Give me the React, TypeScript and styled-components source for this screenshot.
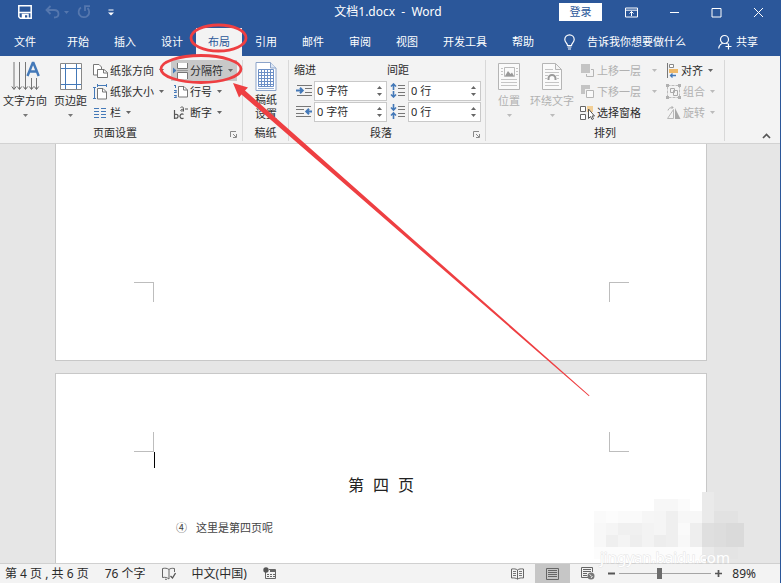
import React from 'react';
import styled, { createGlobalStyle, css } from 'styled-components';

const BLUE = '#2b579a';
const INK = '#2b2b2b';
const MUTED = '#b1b1b1';
const ACCENT = '#4479b8';
const RED = '#ee3f42';

const GlobalStyle = createGlobalStyle`
  * { box-sizing: border-box; }
  html, body, #root { height: 100%; }
  body {
    margin: 0;
    font-family: "Noto Sans", "Noto Sans CJK SC", sans-serif;
    font-size: 11px;
    line-height: 16px;
    color: ${INK};
  }
  button, input { font: inherit; color: inherit; }
  button { border: 0; padding: 0; background: none; white-space: nowrap; }
`;

const Window = styled.div`
  position: relative;
  display: flex;
  flex-direction: column;
  height: 100vh;
  overflow: hidden;
  border-right: 1px solid ${BLUE};
  background: #e6e6e6;
`;

const Svg = styled.svg`
  display: block;
  flex: none;
  fill: none;
`;

/* ---------- title bar ---------- */

const TitleBar = styled.header`
  display: grid;
  grid-template-columns: 1fr auto 1fr;
  align-items: center;
  height: 24px;
  flex: none;
  padding-right: 4px;
  background: ${BLUE};
  color: #fff;
`;

const QuickAccess = styled.div`
  display: flex;
  align-items: center;
  padding-left: 18px;
`;

const QuickButton = styled.button<{ $gap?: number }>`
  margin-right: ${(p) => p.$gap ?? 0}px;
`;

const Title = styled.h1`
  margin: 0;
  font-size: 12px;
  font-weight: 400;
  white-space: pre;
`;

const WindowControls = styled.div`
  display: flex;
  align-items: center;
  justify-content: flex-end;
  gap: 31px;
  padding-right: 12px;
`;

const SignIn = styled.button`
  width: 43px;
  height: 18px;
  margin-right: -8px;
  background: #fff;
  color: ${BLUE};
`;

/* ---------- tabs ---------- */

const TabBar = styled.nav`
  display: flex;
  align-items: stretch;
  height: 32px;
  flex: none;
  padding: 4px 22px 0 2px;
  gap: 1px;
  background: ${BLUE};
  color: #fff;
`;

const Tab = styled.button<{ $active?: boolean; $file?: boolean }>`
  padding: 0 12px;
  margin-right: ${(p) => (p.$file ? 6 : 0)}px;
  ${(p) =>
    p.$active &&
    css`
      background: #f3f3f3;
      color: ${BLUE};
    `}
`;

const TellMe = styled.button`
  display: flex;
  align-items: center;
  gap: 12px;
  margin-left: 17px;
`;

const Share = styled.button`
  display: flex;
  align-items: center;
  gap: 4px;
  margin-left: auto;
`;

/* ---------- ribbon ---------- */

const Ribbon = styled.section`
  display: flex;
  flex: none;
  height: 88px;
  padding-top: 4px;
  background: #f3f3f3;
  border-bottom: 1px solid #d2d2d2;
`;

const Group = styled.div<{ $padLeft: number; $padRight: number }>`
  display: flex;
  flex-direction: column;
  margin-bottom: 2px;
  border-right: 1px solid #d8d8d8;
  & > :first-child {
    padding-left: ${(p) => p.$padLeft}px;
    padding-right: ${(p) => p.$padRight}px;
  }
`;

const GroupBody = styled.div`
  display: flex;
  flex: none;
  height: 64px;
`;

const GroupFooter = styled.div`
  display: flex;
  flex: none;
  align-items: center;
  height: 18px;
`;

const GroupName = styled.span`
  flex: 1;
  text-align: center;
`;

const Launcher = styled.button`
  width: 12px;
  padding-top: 3px;
`;

const LargeButton = styled.button<{ $gap?: number }>`
  display: flex;
  flex-direction: column;
  align-items: center;
  margin-right: ${(p) => p.$gap ?? 0}px;
  &:disabled { color: ${MUTED}; }
`;

const LargeIcon = styled.span`
  display: grid;
  place-items: center;
  height: 33px;
`;

const TwoLine = styled.span`
  line-height: 14px;
`;

const ArrowSlot = styled.span`
  display: grid;
  place-items: center;
  height: 12px;
`;

const Column = styled.div<{ $gap?: number }>`
  display: flex;
  flex-direction: column;
  align-items: flex-start;
  margin-right: ${(p) => p.$gap ?? 0}px;
`;

const SmallButton = styled.button<{ $active?: boolean }>`
  display: flex;
  align-items: center;
  gap: 2px;
  height: 21px;
  padding: 0 4px 0 2px;
  background: ${(p) => (p.$active ? '#c8c8c8' : 'transparent')};
  &:disabled { color: ${MUTED}; }
`;

const SmallArrow = styled.span<{ $wide?: boolean }>`
  padding-left: ${(p) => (p.$wide ? 9 : 3)}px;
`;

const FieldGrid = styled.div`
  display: grid;
  grid-template-columns: 20px 73px 21px 73px;
  grid-template-rows: 20px 21px 21px;
  align-items: center;
`;

const FieldHeading = styled.span`
  grid-column: span 2;
`;

const FieldLabel = styled.label`
  display: grid;
  place-items: center;
`;

const Spinner = styled.div`
  display: flex;
  height: 20px;
  border: 1px solid #c9c9c9;
  background: #fff;
`;

const SpinnerInput = styled.input`
  flex: 1;
  min-width: 0;
  padding: 0 2px;
  border: 0;
  background: none;
  outline: none;
`;

const SpinnerButtons = styled.div`
  display: flex;
  flex-direction: column;
  justify-content: space-evenly;
  padding: 0 4px;
`;

const Collapse = styled.button`
  align-self: flex-end;
  margin: 0 9px 4px auto;
`;

/* ---------- document ---------- */

const Workspace = styled.main`
  flex: 1;
  min-height: 0;
  display: flex;
  flex-direction: column;
  gap: 12px;
  padding: 0 73px 0 55px;
  overflow: hidden;
`;

const Page = styled.article<{ $position: 'previous' | 'current' }>`
  display: flex;
  flex-direction: column;
  border: 1px solid #c8c8c8;
  background: #fff;
  ${(p) =>
    p.$position === 'previous'
      ? css`
          flex: none;
          border-top: 0;
          padding-top: 138px;
          padding-bottom: 58px;
        `
      : css`
          flex: 1;
          border-bottom: 0;
          padding-top: 58px;
        `}
`;

const CropMarks = styled.div`
  display: flex;
  justify-content: space-between;
  padding: 0 77px 0 78px;
`;

const CropMark = styled.span<{ $edge: 'top' | 'bottom'; $side: 'left' | 'right' }>`
  width: 20px;
  height: 20px;
  border: 0 solid #bdbdbd;
  border-${(p) => p.$edge}-width: 1px;
  border-${(p) => p.$side}-width: 1px;
`;

const Caret = styled.span`
  width: 1px;
  height: 16px;
  margin-left: 98px;
  background: #000;
`;

const PageTitle = styled.h2`
  margin: 5px 0 0;
  font-size: 16px;
  line-height: 24px;
  font-weight: 400;
  text-align: center;
  color: #222;
`;

const TitleChars = styled.span`
  display: inline-flex;
  gap: 9px;
`;

const ListLine = styled.p`
  display: flex;
  gap: 9px;
  margin: 22px 0 0 120px;
  font-family: "Noto Sans CJK SC", sans-serif;
  color: #444;
`;

/* ---------- status bar ---------- */

const StatusBar = styled.footer`
  display: flex;
  align-items: center;
  flex: none;
  height: 20px;
  padding: 0 24px 0 5px;
  border-top: 1px solid #d0d0d0;
  background: #f3f3f3;
  font-size: 12px;
`;

const StatusItem = styled.button`
  margin-right: 16px;
`;

const StatusRight = styled.div`
  display: flex;
  align-items: center;
  align-self: stretch;
  margin-left: auto;
`;

const ViewButton = styled.button<{ $active?: boolean }>`
  display: grid;
  place-items: center;
  width: 35px;
  height: 100%;
  background: ${(p) => (p.$active ? '#c6c6c6' : 'transparent')};
`;

const ZoomSlider = styled.input`
  appearance: none;
  width: 92px;
  height: 12px;
  margin: 0 4px;
  background: linear-gradient(#a5a5a5, #a5a5a5) center / 100% 1px no-repeat;
  &::-webkit-slider-thumb {
    appearance: none;
    width: 5px;
    height: 11px;
    background: #6c6c6c;
  }
`;

const ZoomValue = styled.button`
  margin-left: 10px;
`;

/* ---------- overlays ---------- */

const Annotation = styled(Svg)`
  position: absolute;
  top: 0;
  left: 0;
  pointer-events: none;
`;

const Watermark = styled(Svg)`
  position: absolute;
  right: 36px;
  bottom: 12px;
  pointer-events: none;
`;

/* ---------- icons ---------- */

type IconProps = { w: number; h: number; children: React.ReactNode };

const Icon = ({ w, h, children }: IconProps) => (
  <Svg width={w} height={h} viewBox={`0 0 ${w} ${h}`} aria-hidden="true">
    {children}
  </Svg>
);

const Down = ({ color = '#777' }: { color?: string }) => (
  <Icon w={5} h={3}>
    <path d="M0 0h5L2.500 3z" fill={color} />
  </Icon>
);

const Up = () => (
  <Icon w={5} h={3}>
    <path d="M0 3h5L2.500 0z" fill="#666" />
  </Icon>
);

const SaveIcon = () => (
  <Icon w={14} h={14}>
    <path d="M.8 .8h12.400v12.400H2.300L.8 11.700z" stroke="#fff" strokeWidth="1.500" />
    <path d="M1 7.500h12M4.500 13V9.500h5.500V13" stroke="#fff" strokeWidth="1.500" />
    <path d="M5 10h2v3H5z" fill="#fff" />
  </Icon>
);

const UndoIcon = () => (
  <Icon w={24} h={14}>
    <path d="M5.500 1L1.500 5l4 4M2 5h7c3 0 4.500 2 4.500 4S12 12.500 9 12.500" stroke="#5577ae" strokeWidth="1.800" />
    <path d="M19 6h5l-2.500 3z" fill="#5577ae" />
  </Icon>
);

const RedoIcon = () => (
  <Icon w={14} h={14}>
    <path d="M4 2.500A5.300 5.300 0 1 0 10.500 3M8 6V1.200h5" stroke="#5577ae" strokeWidth="1.800" />
  </Icon>
);

const CustomizeIcon = () => (
  <Icon w={6} h={7}>
    <path d="M.5 1h5" stroke="#fff" />
    <path d="M0 3.500h6L3 6.500z" fill="#fff" />
  </Icon>
);

const RibbonOptionsIcon = () => (
  <Icon w={13} h={11}>
    <path d="M.5 1h12v9H.5zM.5 3.200h12M6.500 9V4.500M4.500 6.500l2-2 2 2" stroke="#fff" />
  </Icon>
);

const BulbIcon = () => (
  <Icon w={11} h={16}>
    <path d="M3.500 11.500c0-2.500-2.700-3-2.700-6a4.700 4.700 0 0 1 9.400 0c0 3-2.700 3.500-2.700 6zM3.500 13h4M4 15h3" stroke="#fff" strokeWidth="1.200" />
  </Icon>
);

const ShareIcon = () => (
  <Icon w={14} h={16}>
    <circle cx="6.500" cy="5.500" r="4" stroke="#fff" strokeWidth="1.200" />
    <path d="M.7 14.500c.2-2.500 1.800-4.500 4-5.300M8.300 9l1.200 1M10.500 9.500v6M7.500 12.500h6" stroke="#fff" strokeWidth="1.200" />
  </Icon>
);

const TextDirectionIcon = () => (
  <Icon w={29} h={31}>
    <path d="M3 1v27M8.500 1v27M14.500 1v27M20.500 17v11M25.500 17v11" stroke="#777" />
    <path d="M.8 25.500L3 28.500l2.200-3M6.300 25.500l2.200 3 2.200-3M12.300 25.500l2.200 3 2.200-3M18.300 25.500l2.200 3 2.200-3M23.300 25.500l2.200 3 2.200-3" stroke="#666" />
    <path d="M16.500 15L21.700 2h.8L27.700 15M18 10.500h8" stroke={ACCENT} strokeWidth="2.400" />
  </Icon>
);

const MarginsIcon = () => (
  <Icon w={22} h={27}>
    <path d="M.5 .5h21v26H.5z" fill="#fff" stroke="#888" />
    <path d="M5.500 1v25M16.500 1v25M1 5.500h20M1 21.500h20" stroke={ACCENT} />
  </Icon>
);

const sheet = 'h5.500l3.500 3.500v7h-9z';

const OrientationIcon = () => (
  <Icon w={15} h={16}>
    <path d="M.5 1.500H6L8.500 4v8h-8z" fill="#fff" stroke="#777" />
    <path d="M4.500 6.500H11l3.500 3v5h-10z" fill="#fff" stroke="#777" />
    <path d="M10.500 6.500v3.500h4" stroke="#777" />
  </Icon>
);

const SizeIcon = () => (
  <Icon w={15} h={16}>
    <path d={`M4.500 4.500${sheet}`} fill="#fff" stroke="#777" />
    <path d="M9.500 4.500V8h4" stroke="#777" />
    <path d="M1.500 3v12M0 3.500h3M0 14.500h3M4.500 1.500h9M4.500 0v3M13.500 0v3" stroke={ACCENT} />
  </Icon>
);

const ColumnsIcon = () => (
  <Icon w={15} h={12}>
    <path d="M1 1.500h5M1 4.500h5M1 7.500h5M1 10.500h5M8 1.500h5M8 4.500h5M8 7.500h5M8 10.500h5" stroke={ACCENT} />
  </Icon>
);

const BreaksIcon = () => (
  <Icon w={15} h={16}>
    <path d="M4.500 0v5.500h10V0M4.500 16V9.500h10V16" fill="#fff" stroke="#777" />
    <path d="M4 7.500h11" stroke="#999" />
    <path d="M0 4.500v6l3.500-3z" fill={ACCENT} />
  </Icon>
);

const LineNumbersIcon = () => (
  <Icon w={15} h={15}>
    <path d={`M5.500 2.500${sheet}`} fill="#fff" stroke="#777" />
    <path d="M10.500 2.500V6h4" stroke="#777" />
    <path d="M2.500 1v3M1 1.500h2M1 6.500h2.500M1 8.500h2.500M1 11.500h2.500M1 13.500h2.500M3 6v3M3 11v3" stroke={ACCENT} />
  </Icon>
);

const HyphenationIcon = () => (
  <Icon w={15} h={16}>
    <path d="M1.500 5v9M1.500 10a2 2 0 1 1 0 2.500M10.500 9.500a2.200 2.200 0 1 0 0 3.500" stroke="#555" strokeWidth="1.200" />
    <path d="M7.500 2.500c1-.8 3-.8 3 .8V6.500M10.500 4.200c-4 0-3.500 3 0 1.300M12 4h3" stroke="#555" />
  </Icon>
);

const GridPaperIcon = () => (
  <Icon w={22} h={29}>
    <path d="M1 .5h14.500L21 6v22.500H1z" fill="#fff" stroke="#8ba3c9" />
    <path d="M15.500 .5V6H21" fill="#dde7f5" stroke="#8ba3c9" />
    <path d="M3.500 7.500h15v17h-15zM3.500 10.500h15M3.500 13.500h15M3.500 16.500h15M3.500 19.500h15M3.500 22.500h15M6.500 7.500v17M9.500 7.500v17M12.500 7.500v17M15.500 7.500v17" stroke="#6c8fc6" />
    <path d="M3 26.500h16" stroke="#9fb6da" />
  </Icon>
);

const IndentIcon = ({ right }: { right?: boolean }) => (
  <Icon w={16} h={13}>
    <path d={right ? 'M0 1.500h15M0 4.500h8M0 8.500h8M0 11.500h15' : 'M1 1.500h15M9 4.500h7M9 8.500h7M1 11.500h15'} stroke="#777" />
    <path d={right ? 'M16 6.500h-5M13 3.800l-2.700 2.700L13 9.200' : 'M0 6.500h6M4 3.800l2.700 2.700L4 9.200'} stroke={ACCENT} strokeWidth="2" />
  </Icon>
);

const SpacingIcon = ({ after }: { after?: boolean }) => (
  <Icon w={16} h={15}>
    <path d="M8 2.500h7M8 5.500h7M8 9.500h7M8 12.500h7" stroke="#777" />
    <path
      d={after ? 'M3.500 0v6M1 3.500L3.500 6 6 3.500M3.500 15V9M1 11.500L3.500 9 6 11.500' : 'M3.500 7V1M1 3.500L3.500 1 6 3.500M3.500 8v6M1 11.500L3.500 14 6 11.500'}
      stroke={ACCENT}
      strokeWidth="1.600"
    />
  </Icon>
);

const LauncherIcon = () => (
  <Icon w={7} h={7}>
    <path d="M.5 6V.5H6M3 3l3 3M6.500 3v3.500H3" stroke="#888" />
  </Icon>
);

const PositionIcon = () => (
  <Icon w={22} h={27}>
    <path d="M.5 .5h21v26H.5z" fill="#fafafa" stroke="#b5b5b5" />
    <path d="M6.500 4.500h10v9h-10z" stroke="#bbb" />
    <path d="M7 13l3-5 2.500 3 1.500-1.500L16 13z" fill="#999" />
    <path d="M3 5.500h2M3 8.500h2M3 11.500h2M18 5.500h2M18 8.500h2M18 11.500h2M3 16.500h16M3 19.500h16M3 22.500h16" stroke="#c5c5c5" />
  </Icon>
);

const WrapIcon = () => (
  <Icon w={20} h={27}>
    <path d="M.5 .5h13l6 6v20H.5zM13.500 .5v6h6" fill="#fafafa" stroke="#b5b5b5" />
    <path d="M3 6.500h8M3 9.500h14M3 12.500h3M14 12.500h3M3 15.500h2M15 15.500h2M3 19.500h14M3 22.500h14" stroke="#c5c5c5" />
    <path d="M6.500 17v-1.500a3.500 3.500 0 0 1 7 0V17" stroke="#999" strokeWidth="2" />
  </Icon>
);

const ForwardIcon = () => (
  <Icon w={15} h={15}>
    <path d="M1 1h9v9H1z" fill="#c4c4c4" />
    <path d="M11 6.500h2.500v7h-7V11" stroke="#b5b5b5" />
  </Icon>
);

const BackwardIcon = () => (
  <Icon w={15} h={15}>
    <path d="M1 1h9v4H5v5H1z" fill="#c4c4c4" />
    <path d="M6.500 6.500h7v7h-7z" fill="#fafafa" stroke="#b5b5b5" />
  </Icon>
);

const SelectionIcon = () => (
  <Icon w={15} h={16}>
    <path d="M.5 1.500h5v5h-5zM.5 9.500h5v5h-5z" fill="#fff" stroke="#666" />
    <path d="M7 1h6v6H7z" fill="#f2cf96" />
    <path d="M8.500 4v9.500l2-2 1.500 3 1.500-.8-1.500-2.700h2.500z" fill="#fff" stroke="#555" />
  </Icon>
);

const AlignIcon = () => (
  <Icon w={13} h={15}>
    <path d="M1.500 0v15" stroke="#777" />
    <path d="M3.500 1.500h4v3h-4z" fill="#fff" stroke="#888" />
    <path d="M3 6h9v4H3z" fill="#eeb868" />
    <path d="M10 12.500H4.500M6.500 10.500l-2 2 2 2" stroke={ACCENT} strokeWidth="1.300" />
  </Icon>
);

const GroupIcon = () => (
  <Icon w={15} h={15}>
    <path d="M1.500 1.500h12v12h-12z" stroke="#bbb" strokeDasharray="3 1" />
    <path d="M4.500 4.500h4v4h-4zM7.500 6.500h4v5h-4z" stroke="#aaa" />
    <path d="M0 0h3v3H0zM12 0h3v3h-3zM0 12h3v3H0zM12 12h3v3h-3z" fill="#b0b0b0" />
  </Icon>
);

const RotateIcon = () => (
  <Icon w={15} h={13}>
    <path d="M7.500 12.500v-9l-6 9z" stroke="#b8b8b8" />
    <path d="M9 13V2l5.500 11z" fill="#a8a8a8" />
    <path d="M2 4.500C2.500 2 4.500 1.500 7 1.500M5.500 0L7 1.500 5.500 3" stroke="#b0b0b0" />
  </Icon>
);

const ProofIcon = () => (
  <Icon w={14} h={13}>
    <path d="M7 2.500C5 1 3 1 .5 1.500v9c2.500-.5 4.500 0 6.500 1.500M7 2.500C8 1.500 10 1 12.500 1.500V5M7 2.500V12M3 12l2 1" stroke="#666" />
    <path d="M8.500 9l2 2 3-5" stroke="#555" strokeWidth="1.300" />
  </Icon>
);

const MacroIcon = () => (
  <Icon w={13} h={13}>
    <path d="M2.500 4v7.500h10V2.500H6" stroke="#666" />
    <circle cx="3" cy="3" r="2.700" fill="#555" />
    <path d="M7 3h5v2H7z" fill="#666" />
    <path d="M4 7.500h2M7 7.500h2M10 7.500h2M4 9.500h2M7 9.500h2M10 9.500h2" stroke="#666" />
  </Icon>
);

const ReadIcon = () => (
  <Icon w={13} h={12}>
    <path d="M6.500 2C5 .8 3 .7 .5 1v9c2.500-.3 4.500 0 6 1.200C8 10 10 9.700 12.500 10V1C10 .7 8 .8 6.500 2v9" stroke="#666" />
    <path d="M2 3.500h3M2 5.500h3M2 7.500h3M8 3.500h3M8 5.500h3M8 7.500h3" stroke="#777" />
  </Icon>
);

const PrintIcon = () => (
  <Icon w={13} h={12}>
    <path d="M.5 .5h12v11H.5zM2 2.500h9M2 4.500h9M2 6.500h9M2 8.500h9" stroke="#666" />
  </Icon>
);

const WebIcon = () => (
  <Icon w={14} h={13}>
    <path d="M7 10.500H.5V.5h11V5M2 2.500h8M2 4.500h8M2 6.500h4M2 8.500h4" stroke="#666" />
    <circle cx="10" cy="9" r="3.500" fill="#777" />
    <path d="M8.500 7.500l2 1.500M10 11l1.500-2" stroke="#eee" />
  </Icon>
);

/* ---------- composed controls ---------- */

type CommandProps = {
  icon: React.ReactNode;
  label: string;
  menu?: boolean;
  wide?: boolean;
  active?: boolean;
  disabled?: boolean;
};

const Command = ({ icon, label, menu, wide, active, disabled }: CommandProps) => (
  <SmallButton $active={active} disabled={disabled}>
    {icon}
    {label}
    {menu && (
      <SmallArrow $wide={wide}>
        <Down color={disabled ? '#bbb' : '#666'} />
      </SmallArrow>
    )}
  </SmallButton>
);

type BigProps = { icon: React.ReactNode; label: string; gap: number; disabled?: boolean };

const BigCommand = ({ icon, label, gap, disabled }: BigProps) => (
  <LargeButton $gap={gap} disabled={disabled}>
    <LargeIcon>{icon}</LargeIcon>
    {label}
    <ArrowSlot>
      <Down color={disabled ? '#bbb' : '#777'} />
    </ArrowSlot>
  </LargeButton>
);

type FieldProps = { id: string; icon: React.ReactNode; name: string; value: string };

const Field = ({ id, icon, name, value }: FieldProps) => (
  <>
    <FieldLabel htmlFor={id} aria-label={name}>
      {icon}
    </FieldLabel>
    <Spinner>
      <SpinnerInput id={id} defaultValue={value} />
      <SpinnerButtons>
        <button aria-label={`${name} +`}>
          <Up />
        </button>
        <button aria-label={`${name} -`}>
          <Down color="#666" />
        </button>
      </SpinnerButtons>
    </Spinner>
  </>
);

const TABS = ['开始', '插入', '设计', '布局', '引用', '邮件', '审阅', '视图', '开发工具', '帮助'];

/* x, y, width, height, fill of each mosaic block */
const BLOCKS: [number, number, number, number, string][] = [
  [60, 7, 24, 12, '#f7f7f7'],
  [84, 7, 12, 12, '#fbfbfb'],
  [0, 19, 12, 12, '#fafafa'],
  [12, 19, 12, 12, '#fcfcfc'],
  [24, 19, 24, 12, '#fafafa'],
  [48, 19, 12, 12, '#f6f6f6'],
  [60, 19, 12, 24, '#f5f5f5'],
  [72, 19, 12, 36, '#efefef'],
  [84, 19, 24, 12, '#f7f7f7'],
  [0, 31, 12, 24, '#f8f8f8'],
  [12, 31, 12, 12, '#f5f5f5'],
  [24, 31, 24, 12, '#f0f0f0'],
  [48, 31, 12, 24, '#f3f3f3'],
  [84, 31, 12, 12, '#fafafa'],
  [96, 31, 12, 24, '#eeeeee'],
  [12, 43, 12, 12, '#efefef'],
  [24, 43, 12, 12, '#f4f4f4'],
  [36, 43, 12, 12, '#eeeeee'],
  [60, 43, 12, 12, '#ededed'],
  [84, 43, 12, 12, '#f8f8f8'],
  [0, 55, 108, 12, '#fcfcfc'],
  [108, 0, 12, 67, '#eaeaea'],
  [108, 31, 12, 24, '#dfdfdf'],
  [120, 19, 24, 12, '#e2e2e2'],
  [120, 31, 12, 24, '#dddddd'],
  [132, 31, 18, 24, '#dadada'],
  [120, 55, 24, 12, '#e4e4e4'],
];

export default function App() {
  return (
    <Window>
      <GlobalStyle />
      <TitleBar>
        <QuickAccess>
          <QuickButton $gap={13} aria-label="保存"><SaveIcon /></QuickButton>
          <QuickButton $gap={8} aria-label="撤消"><UndoIcon /></QuickButton>
          <QuickButton $gap={17} aria-label="重复"><RedoIcon /></QuickButton>
          <QuickButton aria-label="自定义"><CustomizeIcon /></QuickButton>
        </QuickAccess>
        <Title>{'文档1.docx  -  Word'}</Title>
        <WindowControls>
          <SignIn>登录</SignIn>
          <button aria-label="功能区显示选项"><RibbonOptionsIcon /></button>
          <button aria-label="最小化">
            <Icon w={11} h={11}><path d="M1 5.500h9" stroke="#fff" /></Icon>
          </button>
          <button aria-label="最大化">
            <Icon w={11} h={11}><path d="M1 1.500h9v8.500H1z" stroke="#fff" /></Icon>
          </button>
          <button aria-label="关闭">
            <Icon w={11} h={11}><path d="M1 1l9 9M10 1l-9 9" stroke="#fff" /></Icon>
          </button>
        </WindowControls>
      </TitleBar>

      <TabBar>
        <Tab $file>文件</Tab>
        {TABS.map((t) => (
          <Tab key={t} $active={t === '布局'}>{t}</Tab>
        ))}
        <TellMe><BulbIcon />告诉我你想要做什么</TellMe>
        <Share><ShareIcon />共享</Share>
      </TabBar>

      <Ribbon>
        <Group $padLeft={3} $padRight={5}>
          <GroupBody>
            <BigCommand icon={<TextDirectionIcon />} label="文字方向" gap={7} />
            <BigCommand icon={<MarginsIcon />} label="页边距" gap={4} />
            <Column $gap={3}>
              <Command icon={<OrientationIcon />} label="纸张方向" menu />
              <Command icon={<SizeIcon />} label="纸张大小" menu />
              <Command icon={<ColumnsIcon />} label="栏" menu />
            </Column>
            <Column>
              <Command icon={<BreaksIcon />} label="分隔符" menu active />
              <Command icon={<LineNumbersIcon />} label="行号" menu />
              <Command icon={<HyphenationIcon />} label="断字" menu />
            </Column>
          </GroupBody>
          <GroupFooter>
            <GroupName>页面设置</GroupName>
            <Launcher aria-label="页面设置选项"><LauncherIcon /></Launcher>
          </GroupFooter>
        </Group>

        <Group $padLeft={12} $padRight={11}>
          <GroupBody>
            <LargeButton>
              <LargeIcon><GridPaperIcon /></LargeIcon>
              <TwoLine>稿纸<br />设置</TwoLine>
            </LargeButton>
          </GroupBody>
          <GroupFooter><GroupName>稿纸</GroupName></GroupFooter>
        </Group>

        <Group $padLeft={5} $padRight={4}>
          <GroupBody>
            <FieldGrid>
              <FieldHeading>缩进</FieldHeading>
              <FieldHeading>间距</FieldHeading>
              <Field id="indent-left" icon={<IndentIcon />} name="左缩进" value="0 字符" />
              <Field id="space-before" icon={<SpacingIcon />} name="段前间距" value="0 行" />
              <Field id="indent-right" icon={<IndentIcon right />} name="右缩进" value="0 字符" />
              <Field id="space-after" icon={<SpacingIcon after />} name="段后间距" value="0 行" />
            </FieldGrid>
          </GroupBody>
          <GroupFooter>
            <GroupName>段落</GroupName>
            <Launcher aria-label="段落选项"><LauncherIcon /></Launcher>
          </GroupFooter>
        </Group>

        <Group $padLeft={12} $padRight={5}>
          <GroupBody>
            <BigCommand icon={<PositionIcon />} label="位置" gap={10} disabled />
            <BigCommand icon={<WrapIcon />} label="环绕文字" gap={4} disabled />
            <Column $gap={3}>
              <Command icon={<ForwardIcon />} label="上移一层" menu wide disabled />
              <Command icon={<BackwardIcon />} label="下移一层" menu wide disabled />
              <Command icon={<SelectionIcon />} label="选择窗格" />
            </Column>
            <Column>
              <Command icon={<AlignIcon />} label="对齐" menu />
              <Command icon={<GroupIcon />} label="组合" menu disabled />
              <Command icon={<RotateIcon />} label="旋转" menu disabled />
            </Column>
          </GroupBody>
          <GroupFooter><GroupName>排列</GroupName></GroupFooter>
        </Group>

        <Collapse aria-label="折叠功能区">
          <Icon w={9} h={6}><path d="M1 5l3.500-3.500L8 5" stroke="#555" strokeWidth="1.700" /></Icon>
        </Collapse>
      </Ribbon>

      <Workspace>
        <Page $position="previous">
          <CropMarks>
            <CropMark $edge="top" $side="right" />
            <CropMark $edge="top" $side="left" />
          </CropMarks>
        </Page>
        <Page $position="current">
          <CropMarks>
            <CropMark $edge="bottom" $side="right" />
            <CropMark $edge="bottom" $side="left" />
          </CropMarks>
          <Caret />
          <PageTitle>
            <TitleChars><span>第</span><span>四</span><span>页</span></TitleChars>
          </PageTitle>
          <ListLine><span>④</span><span>这里是第四页呢</span></ListLine>
        </Page>
      </Workspace>

      <StatusBar>
        <StatusItem>第 4 页 , 共 6 页</StatusItem>
        <StatusItem>76 个字</StatusItem>
        <StatusItem aria-label="校对"><ProofIcon /></StatusItem>
        <StatusItem>中文(中国)</StatusItem>
        <StatusItem aria-label="录制宏"><MacroIcon /></StatusItem>
        <StatusRight>
          <ViewButton aria-label="阅读视图"><ReadIcon /></ViewButton>
          <ViewButton $active aria-label="页面视图"><PrintIcon /></ViewButton>
          <ViewButton aria-label="Web 版式视图"><WebIcon /></ViewButton>
          <button aria-label="缩小">
            <Icon w={10} h={9}><path d="M3 4.500h7" stroke="#555" strokeWidth="2" /></Icon>
          </button>
          <ZoomSlider type="range" min={10} max={190} defaultValue={89} aria-label="显示比例" />
          <button aria-label="放大">
            <Icon w={7} h={9}><path d="M0 4.500h7M3.500 1v7" stroke="#555" strokeWidth="1.700" /></Icon>
          </button>
          <ZoomValue>89%</ZoomValue>
        </StatusRight>
      </StatusBar>

      <Watermark width="150" height="79" viewBox="0 0 150 79" aria-hidden="true">
        {BLOCKS.map(([x, y, w, h, fill], i) => (
          <rect key={i} x={x} y={y} width={w} height={h} fill={fill} />
        ))}
        <text x="6" y="71" fontSize="15" fill="#fff" stroke="#e4e4e4" strokeWidth="1" paintOrder="stroke">
          jingyan.baidu.com
        </text>
      </Watermark>

      <Annotation width="600" height="400" viewBox="0 0 600 400" aria-hidden="true">
        <ellipse cx="218.500" cy="38" rx="27.500" ry="13" stroke={RED} strokeWidth="2.800" />
        <ellipse cx="201" cy="69" rx="40" ry="13.500" stroke={RED} strokeWidth="2.800" />
        <path d="M233 83L248 87.500L245 90.500L589.500 395.500L589 396.200L241.500 94.500L239 97.500z" fill={RED} />
      </Annotation>
    </Window>
  );
}
